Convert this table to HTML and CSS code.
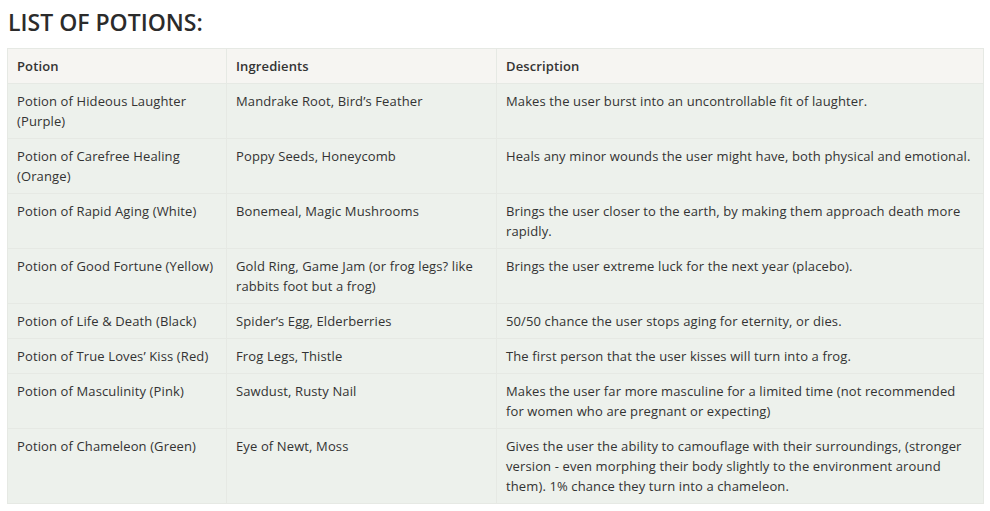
FILE: index.html
```html
<!DOCTYPE html>
<html>
<head>
<meta charset="utf-8">
<link rel="stylesheet" href="styles.css">
</head>
<body>
<h1 class="title">LIST OF POTIONS:</h1>
<table class="potions">
<colgroup><col class="c1"><col class="c2"><col class="c3"></colgroup>
<thead>
<tr><th>Potion</th><th>Ingredients</th><th>Description</th></tr>
</thead>
<tbody>
<tr><td>Potion of Hideous Laughter (Purple)</td><td>Mandrake Root, Bird’s Feather</td><td>Makes the user burst into an uncontrollable fit of laughter.</td></tr>
<tr><td>Potion of Carefree Healing (Orange)</td><td>Poppy Seeds, Honeycomb</td><td>Heals any minor wounds the user might have, both physical and emotional.</td></tr>
<tr><td>Potion of Rapid Aging (White)</td><td>Bonemeal, Magic Mushrooms</td><td>Brings the user closer to the earth, by making them approach death more rapidly.</td></tr>
<tr><td>Potion of Good Fortune (Yellow)</td><td>Gold Ring, Game Jam (or frog legs? like rabbits foot but a frog)</td><td>Brings the user extreme luck for the next year (placebo).</td></tr>
<tr><td>Potion of Life &amp; Death (Black)</td><td>Spider’s Egg, Elderberries</td><td>50/50 chance the user stops aging for eternity, or dies.</td></tr>
<tr><td>Potion of True Loves’ Kiss (Red)</td><td>Frog Legs, Thistle</td><td>The first person that the user kisses will turn into a frog.</td></tr>
<tr><td>Potion of Masculinity (Pink)</td><td>Sawdust, Rusty Nail</td><td>Makes the user far more masculine for a limited time (not recommended for women who are pregnant or expecting)</td></tr>
<tr><td>Potion of Chameleon (Green)</td><td>Eye of Newt, Moss</td><td>Gives the user the ability to camouflage with their surroundings, (stronger version - even morphing their body slightly to the environment around them). 1% chance they turn into a chameleon.</td></tr>
</tbody>
</table>
</body>
</html>
```
FILE: styles.css
```css
html, body { margin: 0; padding: 0; background: #fff; }
body {
  padding: 6px 7px;
  font-family: "Open Sans", "Noto Sans", sans-serif;
  color: #333;
}
.title {
  margin: 0 0 10px 1px;
  font-size: 23px;
  line-height: 32px;
  font-weight: 600;
  color: #2b2b2b;
}
.potions {
  width: 976px;
  border-collapse: collapse;
  table-layout: fixed;
  font-size: 13px;
  line-height: 20px;
  letter-spacing: 0.12px;
}
.c1 { width: 219px; }
.c2 { width: 270px; }
.c3 { width: 487px; }
.potions th, .potions td {
  border: 1px solid #e6e9e4;
  padding: 7px 9px 7px;
  text-align: left;
  vertical-align: top;
}
.potions th {
  background: #f6f5f2;
  font-weight: 600;
  color: #333;
}
.potions td { background: #edf1ec; }
```
